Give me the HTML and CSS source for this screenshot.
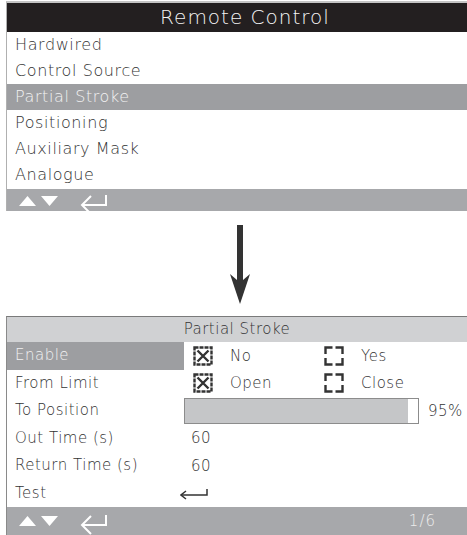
FILE: index.html
```html
<!DOCTYPE html>
<html>
<head>
<meta charset="utf-8">
<link rel="stylesheet" href="styles.css">
</head>
<body>
<div class="screen">
  <section class="panel p1">
    <div class="p1-head">Remote Control</div>
    <ul class="menu">
      <li>Hardwired</li>
      <li>Control Source</li>
      <li class="sel">Partial Stroke</li>
      <li>Positioning</li>
      <li>Auxiliary Mask</li>
      <li>Analogue</li>
    </ul>
    <div class="foot foot1">
      <svg class="navicons" width="110" height="21" viewBox="0 0 110 21">
        <polygon points="12,16 29,16 20.5,6" fill="#fff"/>
        <polygon points="34,6 51,6 42.5,16" fill="#fff"/>
        <g stroke="#fff" stroke-width="2" fill="none">
          <path d="M75 15H99V5"/>
          <path d="M84 6L75 15L84 24"/>
        </g>
      </svg>
    </div>
  </section>

  <div class="flow-arrow">
    <svg width="22" height="105" viewBox="0 0 22 105">
      <rect x="8" y="14" width="6" height="57" fill="#333"/>
      <polygon points="1,63 8,69 14,69 21,63 11,93" fill="#333"/>
    </svg>
  </div>

  <section class="panel p2">
    <div class="p2-head">Partial Stroke</div>
    <div class="rows">
      <div class="row">
        <span class="label sel">Enable</span>
        <span class="val">
          <span class="opt">
            <svg class="cb" width="20" height="20" viewBox="0 0 20 20">
              <rect x="1.5" y="1.5" width="17" height="17" fill="none" stroke="#333" stroke-width="2.4" stroke-dasharray="4 1"/>
              <path d="M4.5 4.5L15.5 15.5M15.5 4.5L4.5 15.5" stroke="#333" stroke-width="2.4"/>
            </svg>
            <span>No</span>
          </span>
          <span class="opt">
            <svg class="cb" width="20" height="20" viewBox="0 0 20 20">
              <path d="M1.5 8V1.5H8.5M11.5 1.5H18.5V8M18.5 12V18.5H11.5M8.5 18.5H1.5V12" fill="none" stroke="#333" stroke-width="2.4"/>
            </svg>
            <span>Yes</span>
          </span>
        </span>
      </div>
      <div class="row">
        <span class="label">From Limit</span>
        <span class="val">
          <span class="opt">
            <svg class="cb" width="20" height="20" viewBox="0 0 20 20">
              <rect x="1.5" y="1.5" width="17" height="17" fill="none" stroke="#333" stroke-width="2.4" stroke-dasharray="4 1"/>
              <path d="M4.5 4.5L15.5 15.5M15.5 4.5L4.5 15.5" stroke="#333" stroke-width="2.4"/>
            </svg>
            <span>Open</span>
          </span>
          <span class="opt">
            <svg class="cb" width="20" height="20" viewBox="0 0 20 20">
              <path d="M1.5 8V1.5H8.5M11.5 1.5H18.5V8M18.5 12V18.5H11.5M8.5 18.5H1.5V12" fill="none" stroke="#333" stroke-width="2.4"/>
            </svg>
            <span>Close</span>
          </span>
        </span>
      </div>
      <div class="row">
        <span class="label">To Position</span>
        <span class="val">
          <span class="bar"><span class="fill" style="width:95.5%"></span></span>
          <span class="pct">95%</span>
        </span>
      </div>
      <div class="row">
        <span class="label">Out Time (s)</span>
        <span class="val"><span class="num">60</span></span>
      </div>
      <div class="row">
        <span class="label">Return Time (s)</span>
        <span class="val"><span class="num">60</span></span>
      </div>
      <div class="row">
        <span class="label">Test</span>
        <span class="val">
          <svg class="enter" width="30" height="14" viewBox="0 0 30 14">
            <g stroke="#333" stroke-width="1.5" fill="none">
              <path d="M1 9H27V3"/>
              <path d="M6 5L1 9L6 13"/>
            </g>
          </svg>
        </span>
      </div>
    </div>
    <div class="foot foot2">
      <svg class="navicons" width="110" height="28" viewBox="0 0 110 28">
        <polygon points="12,19 29,19 20.5,9" fill="#fff"/>
        <polygon points="34,9 51,9 42.5,19" fill="#fff"/>
        <g stroke="#fff" stroke-width="2" fill="none">
          <path d="M75 18H99V8"/>
          <path d="M84 9L75 18L84 27"/>
        </g>
      </svg>
      <span class="page">1/6</span>
    </div>
  </section>
</div>
</body>
</html>
```

FILE: styles.css
```css
html, body {
  margin: 0;
  padding: 0;
  background: #ffffff;
}

body {
  font-family: "DejaVu Sans", "Liberation Sans", sans-serif;
  font-weight: 200;
  color: #333333;
}

.screen {
  padding-top: 1px;
}

.panel {
  margin-left: 6px;
  border-left: 1px solid #b0b0b0;
}

/* ---- top panel ---- */
.p1 {
  border-top: 2px solid #c4c4c4;
}

.p1-head {
  height: 29px;
  line-height: 29px;
  background: #231f20;
  color: #f4f4f4;
  font-size: 20px;
  letter-spacing: 1px;
  text-align: center;
  padding-left: 16px;
}

.menu {
  list-style: none;
  margin: 0;
  padding: 0;
}

.menu li {
  height: 26px;
  line-height: 25px;
  padding-left: 8px;
  font-size: 16px;
  letter-spacing: 0.6px;
}

.menu li.sel {
  background: #9d9ea1;
  color: #f2f2f2;
}

.foot {
  background: #a7a8ab;
  display: flex;
  align-items: center;
}

.foot1 {
  height: 22px;
  margin-top: 1px;
}

.navicons {
  display: block;
}

/* ---- arrow between panels ---- */
.flow-arrow {
  height: 105px;
  padding-left: 229px;
}

.flow-arrow svg {
  display: block;
}

/* ---- bottom panel ---- */
.p2 {
  border-top: 1px solid #7a7a7a;
  border-left-color: #8a8a8a;
}

.p2-head {
  height: 25px;
  line-height: 25px;
  background: #d0d1d3;
  font-size: 15px;
  letter-spacing: 0.5px;
  text-align: center;
}

.rows {
  display: flex;
  flex-direction: column;
}

.row {
  height: 27.5px;
  display: grid;
  grid-template-columns: 177px 1fr;
  font-size: 15px;
  letter-spacing: 0.5px;
}

.label {
  padding-left: 8px;
  line-height: 27px;
}

.label.sel {
  background: #9d9ea1;
  color: #f2f2f2;
}

.val {
  display: flex;
  align-items: center;
}

.opt {
  width: 131px;
  display: flex;
  align-items: center;
  gap: 17px;
}

.opt:first-child {
  margin-left: 9px;
}

.cb {
  display: block;
  flex: none;
}

.bar {
  width: 233px;
  height: 24px;
  border: 1px solid #8c8c8c;
  background: #ffffff;
  display: flex;
}

.fill {
  display: block;
  height: 100%;
  background: #c5c6c8;
}

.pct {
  margin-left: 9px;
}

.num {
  margin-left: 7px;
}

.enter {
  display: block;
  margin-left: -4px;
}

.foot2 {
  height: 28px;
}

.page {
  margin-left: auto;
  margin-right: 31px;
  color: #ececec;
  font-size: 15px;
  letter-spacing: 1px;
}
```
